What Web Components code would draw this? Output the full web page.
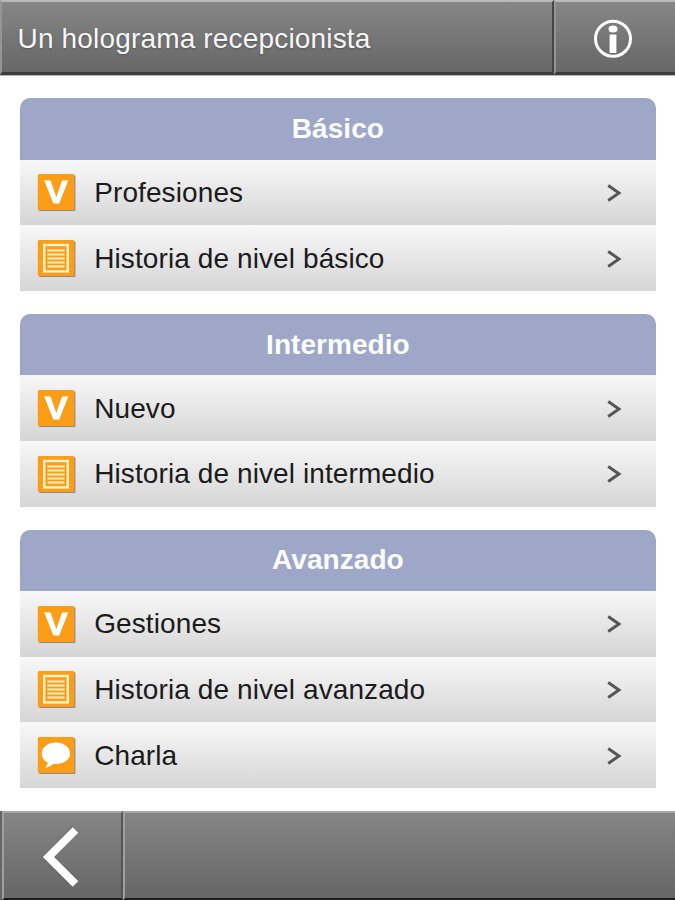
<!DOCTYPE html>
<html lang="es">
<head>
<meta charset="utf-8">
<title>Un holograma recepcionista</title>
<style>
    body {
        margin: 0;
        background: #fff;
        font-family: "Liberation Sans", Arial, sans-serif;
        overflow: hidden;
    }
</style>
</head>
<body>
<lesson-page>
    <top-bar slot="top">Un holograma recepcionista</top-bar>
    <level-card name="Básico">
        <level-item icon="vocab">Profesiones</level-item>
        <level-item icon="story">Historia de nivel básico</level-item>
    </level-card>
    <level-card name="Intermedio">
        <level-item icon="vocab">Nuevo</level-item>
        <level-item icon="story">Historia de nivel intermedio</level-item>
    </level-card>
    <level-card name="Avanzado">
        <level-item icon="vocab">Gestiones</level-item>
        <level-item icon="story">Historia de nivel avanzado</level-item>
        <level-item icon="chat">Charla</level-item>
    </level-card>
    <bottom-bar slot="bottom"></bottom-bar>
</lesson-page>

<script>
class LessonPage extends HTMLElement {
    constructor() {
        super();
        this.attachShadow({mode: "open"});
        this.shadowRoot.innerHTML = /* html */ `
            <style>
                :host {
                    display: flex;
                    flex-direction: column;
                    height: 900px;
                }
                main {
                    flex: 1;
                    display: flex;
                    flex-direction: column;
                    gap: 23px;
                    padding: 22.3px 18.7px 0 19.5px;
                }
            </style>
            <slot name="top"></slot>
            <main><slot></slot></main>
            <slot name="bottom"></slot>
        `;
    }
}

class TopBar extends HTMLElement {
    constructor() {
        super();
        this.attachShadow({mode: "open"});
        this.shadowRoot.innerHTML = /* html */ `
            <style>
                :host {
                    display: flex;
                    box-sizing: border-box;
                    height: 76px;
                    border-bottom: 1px solid #b5b5b5;
                    color: #f7f7f7;
                    font-size: 28px;
                    letter-spacing: 0.17px;
                }
                .title, .info {
                    box-sizing: border-box;
                    display: flex;
                    align-items: center;
                    background: linear-gradient(#868686, #676767);
                    border-top: 2px solid #bababa;
                    border-bottom: 3px solid #3c3c3c;
                    border-left: 2px solid #959595;
                }
                .title {
                    width: 554px;
                    padding: 3px 0 0 15.5px;
                    border-right: 2px solid #454545;
                    white-space: nowrap;
                    text-shadow: 0 1px 2px #555;
                }
                .info {
                    flex: 1;
                    padding: 3px 0 0 36px;
                }
                svg { display: block; }
            </style>
            <div class="title"><slot></slot></div>
            <div class="info">
                <svg width="42" height="42" viewBox="0 0 42 42" fill="#fff">
                    <circle cx="21" cy="20.7" r="17.5" fill="none" stroke="#fff" stroke-width="3"/>
                    <ellipse cx="21" cy="11" rx="4.5" ry="3.6"/>
                    <path d="M17.6 16.4h6.8V35h-6.8z"/>
                </svg>
            </div>
        `;
    }
}

class LevelCard extends HTMLElement {
    connectedCallback() {
        const name = this.getAttribute('name') || '';

        this.attachShadow({mode: "open"});
        this.shadowRoot.innerHTML = /* html */ `
            <style>
                :host {
                    display: block;
                }
                header {
                    display: flex;
                    align-items: center;
                    justify-content: center;
                    height: 61.5px;
                    border-radius: 10px 10px 0 0;
                    background: #9ea7c7;
                    color: #fbfdff;
                    font-size: 28px;
                    font-weight: bold;
                    letter-spacing: 0.05px;
                }
            </style>
            <header>${name}</header>
            <slot></slot>
        `;
    }
}

const icons = {
    vocab: `<text transform="translate(19.2 29.8) scale(1.08 1)" text-anchor="middle" fill="#fff"
        stroke="#fff" stroke-width="0.9" font-size="32" font-weight="bold" letter-spacing="0">V</text>`,
    story: `
        <rect x="7.2" y="6" width="23.6" height="26.4" fill="none" stroke="#fff3cf" stroke-width="2.4"/>
        <path d="M10.5 11.5h17M10.5 15.5h17M10.5 19.5h17M10.5 23.5h17M10.5 27.5h17" stroke="#fff0c6" stroke-width="2"/>`,
    chat: `
        <path d="M18.8 6.5C11 6.5 4.8 11.3 4.8 17.4c0 4.2 2.5 7.5 6 9.2-.3 2-1.3 3.6-2.9 5.2
            3.6-.6 6.3-1.9 8.2-3.9 9.5 1 17-3.9 17-10.5C33.1 11.3 26.7 6.5 18.8 6.5z" fill="#fff"/>`,
};

class LevelItem extends HTMLElement {
    connectedCallback() {
        const icon = icons[this.getAttribute('icon')] || '';

        this.attachShadow({mode: "open"});
        this.shadowRoot.innerHTML = /* html */ `
            <style>
                :host {
                    display: flex;
                    align-items: center;
                    box-sizing: border-box;
                    height: 65.6px;
                    padding: 0.8px 34.8px 0 17.5px;
                    background: linear-gradient(#f8f8f8, #d5d5d5);
                    color: #1b1b1b;
                    font-size: 28px;
                    letter-spacing: 0.1px;
                }
                .label {
                    flex: 1;
                    padding-left: 18.2px;
                    white-space: nowrap;
                }
                svg { display: block; }
                .icon { filter: drop-shadow(1px 1.5px 0.5px #8a8a8a); }
            </style>
            <svg class="icon" width="39" height="39" viewBox="0 0 39 39">
                <rect x="0.8" y="1" width="36.6" height="36" rx="1.5" fill="#fc9d18"/>
                ${icon}
            </svg>
            <div class="label"><slot></slot></div>
            <svg width="16" height="20" viewBox="0 0 16 20" fill="none" stroke="#555" stroke-width="2.9">
                <path d="M2.2 2.5L13 10 2.2 17.5"/>
            </svg>
        `;
    }
}

class BottomBar extends HTMLElement {
    constructor() {
        super();
        this.attachShadow({mode: "open"});
        this.shadowRoot.innerHTML = /* html */ `
            <style>
                :host {
                    display: flex;
                    height: 89px;
                }
                .back, .rest {
                    box-sizing: border-box;
                    background: linear-gradient(#858585, #666);
                    border-top: 2px solid #a8a8a8;
                    border-bottom: 2px solid #1c1c1c;
                    border-left: 2px solid #a0a0a0;
                }
                .edge {
                    width: 2px;
                    background: #666;
                }
                .back {
                    display: flex;
                    align-items: center;
                    width: 121px;
                    padding: 2px 0 0 37px;
                    border-right: 2px solid #555;
                }
                .rest { flex: 1; }
                svg { display: block; }
            </style>
            <div class="edge"></div>
            <div class="back">
                <svg width="42" height="66" viewBox="0 0 42 66">
                    <path d="M34.5 5.5L7.5 33l27 27.5" fill="none" stroke="#555" stroke-width="9.5" opacity="0.4"/>
                    <path d="M34.5 6L7.5 33l27 27" fill="none" stroke="#fff" stroke-width="8"/>
                </svg>
            </div>
            <div class="rest"></div>
        `;
    }
}

customElements.define('lesson-page', LessonPage);
customElements.define('top-bar', TopBar);
customElements.define('level-card', LevelCard);
customElements.define('level-item', LevelItem);
customElements.define('bottom-bar', BottomBar);
</script>
</body>
</html>
